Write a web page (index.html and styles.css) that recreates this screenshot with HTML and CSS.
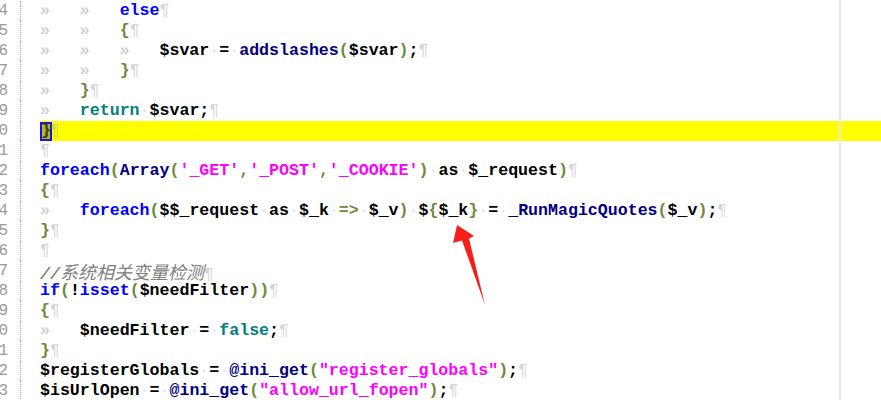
FILE: index.html
```html
<!DOCTYPE html>
<html lang="zh">
<head>
<meta charset="utf-8">
<title>PHP editor</title>
<link rel="stylesheet" href="styles.css">
</head>
<body>
<div class="editor">
  <div class="row"><div class="num">44</div><div class="fold"></div><div class="code"><span class="t">»</span><span class="t">»</span><span class="kw">else</span><span class="p">¶</span></div></div>
  <div class="row"><div class="num">45</div><div class="fold"></div><div class="code"><span class="t">»</span><span class="t">»</span><span class="op">{</span><span class="p">¶</span></div></div>
  <div class="row"><div class="num">46</div><div class="fold"></div><div class="code"><span class="t">»</span><span class="t">»</span><span class="t">»</span><span class="v">$svar</span><span class="s">·</span>=<span class="s">·</span><span class="fn">addslashes</span><span class="op">(</span><span class="v">$svar</span><span class="op">)</span>;<span class="p">¶</span></div></div>
  <div class="row"><div class="num">47</div><div class="fold"></div><div class="code"><span class="t">»</span><span class="t">»</span><span class="op">}</span><span class="p">¶</span></div></div>
  <div class="row"><div class="num">48</div><div class="fold"></div><div class="code"><span class="t">»</span><span class="op">}</span><span class="p">¶</span></div></div>
  <div class="row"><div class="num">49</div><div class="fold"></div><div class="code"><span class="t">»</span><span class="kw2">return</span><span class="s">·</span><span class="v">$svar</span>;<span class="p">¶</span></div></div>
  <div class="row hl"><div class="num">50</div><div class="fold"></div><div class="code"><span class="bm">}</span><span class="p">¶</span></div></div>
  <div class="row"><div class="num">51</div><div class="fold"></div><div class="code"><span class="p">¶</span></div></div>
  <div class="row"><div class="num">52</div><div class="fold"></div><div class="code"><span class="kw">foreach</span><span class="op">(</span><span class="fn">Array</span><span class="op">(</span><span class="str">'_GET'</span><span class="op">,</span><span class="str">'_POST'</span><span class="op">,</span><span class="str">'_COOKIE'</span><span class="op">)</span><span class="s">·</span><span class="v">as</span><span class="s">·</span><span class="v">$_request</span><span class="op">)</span><span class="p">¶</span></div></div>
  <div class="row"><div class="num">53</div><div class="fold"></div><div class="code"><span class="op">{</span><span class="p">¶</span></div></div>
  <div class="row"><div class="num">54</div><div class="fold"></div><div class="code"><span class="t">»</span><span class="kw">foreach</span><span class="op">(</span><span class="v">$$_request</span><span class="s">·</span><span class="v">as</span><span class="s">·</span><span class="v">$_k</span><span class="s">·</span><span class="op">=&gt;</span><span class="s">·</span><span class="v">$_v</span><span class="op">)</span><span class="s">·</span><span class="v">$</span><span class="op">{</span><span class="v">$_k</span><span class="op">}</span><span class="s">·</span>=<span class="s">·</span><span class="fn">_RunMagicQuotes</span><span class="op">(</span><span class="v">$_v</span><span class="op">)</span>;<span class="p">¶</span></div></div>
  <div class="row"><div class="num">55</div><div class="fold"></div><div class="code"><span class="op">}</span><span class="p">¶</span></div></div>
  <div class="row"><div class="num">56</div><div class="fold"></div><div class="code"><span class="p">¶</span></div></div>
  <div class="row"><div class="num">57</div><div class="fold"></div><div class="code"><span class="cm">//<span class="cjk">系统相关变量检测</span></span><span class="p">¶</span></div></div>
  <div class="row"><div class="num">58</div><div class="fold"></div><div class="code"><span class="kw">if</span><span class="op">(</span>!<span class="kw">isset</span><span class="op">(</span><span class="v">$needFilter</span><span class="op">))</span><span class="p">¶</span></div></div>
  <div class="row"><div class="num">59</div><div class="fold"></div><div class="code"><span class="op">{</span><span class="p">¶</span></div></div>
  <div class="row"><div class="num">60</div><div class="fold"></div><div class="code"><span class="t">»</span><span class="v">$needFilter</span><span class="s">·</span>=<span class="s">·</span><span class="kw2">false</span>;<span class="p">¶</span></div></div>
  <div class="row"><div class="num">61</div><div class="fold"></div><div class="code"><span class="op">}</span><span class="p">¶</span></div></div>
  <div class="row"><div class="num">62</div><div class="fold"></div><div class="code"><span class="v">$registerGlobals</span><span class="s">·</span>=<span class="s">·</span><span class="fn">@ini_get</span><span class="op">(</span><span class="str">"register_globals"</span><span class="op">)</span>;<span class="p">¶</span></div></div>
  <div class="row"><div class="num">63</div><div class="fold"></div><div class="code"><span class="v">$isUrlOpen</span><span class="s">·</span>=<span class="s">·</span><span class="fn">@ini_get</span><span class="op">(</span><span class="str">"allow_url_fopen"</span><span class="op">)</span>;<span class="p">¶</span></div></div>
  <div class="edge"></div>
  <svg class="arrow" width="881" height="400" viewBox="0 0 881 400">
    <polygon points="457,225 474,236 469,238.5 485,305 462,240.5 453,243" fill="#f5201a"/>
  </svg>
</div>
</body>
</html>
```

FILE: styles.css
```css
html, body {
  margin: 0;
  padding: 0;
  background: #ffffff;
  overflow: hidden;
}

.editor {
  position: relative;
  width: 881px;
  height: 400px;
  padding-top: 1px;
  box-sizing: border-box;
  font-family: "Liberation Mono", "Noto Sans CJK SC", monospace;
  font-size: 16.6px;
  font-weight: bold;
  color: #000000;
  overflow: hidden;
}

.row {
  display: flex;
  height: 20px;
  line-height: 20px;
}

.num {
  width: 21px;
  box-sizing: border-box;
  flex: none;
  display: flex;
  justify-content: flex-end;
  padding-right: 12px;
  border-right: 1px dotted #a8a8a8;
  overflow: hidden;
  white-space: nowrap;
  font-family: "Liberation Mono", monospace;
  font-weight: normal;
  font-size: 16px;
  color: #9a9a9a;
}

.fold {
  width: 19px;
  flex: none;
}

.code {
  flex: 1;
  white-space: pre;
}

.row.hl .code {
  background: #ffff00;
}

.t {
  display: inline-block;
  width: 4ch;
  font-weight: normal;
  color: #c4c4c4;
}

.p {
  font-weight: normal;
  color: rgba(160, 160, 160, 0.45);
}

.s {
  font-weight: normal;
  color: #e2e2e2;
}

.kw { color: #0000ff; }
.kw2 { color: #008080; }
.fn { color: #000080; }
.v { color: #000000; }
.op { color: #6b8a3a; }
.str { color: #ff00ff; }

.cm {
  color: #808080;
  font-style: italic;
}

.cjk {
  font-family: "Noto Sans CJK SC", sans-serif;
  font-size: 18px;
  font-weight: normal;
}

.bm {
  display: inline-block;
  width: 1ch;
  height: 19px;
  padding: 0 1px;
  margin-right: -2px;
  vertical-align: top;
  margin-top: 1px;
  line-height: 18px;
  background: #b8b820;
  box-shadow: inset 0 0 0 2px #1414e6;
  color: #3a3a00;
}

.edge {
  position: absolute;
  left: 839px;
  top: 0;
  width: 2px;
  height: 400px;
  background: #e8e8e8;
}

.arrow {
  position: absolute;
  left: 0;
  top: 0;
  pointer-events: none;
}
```
